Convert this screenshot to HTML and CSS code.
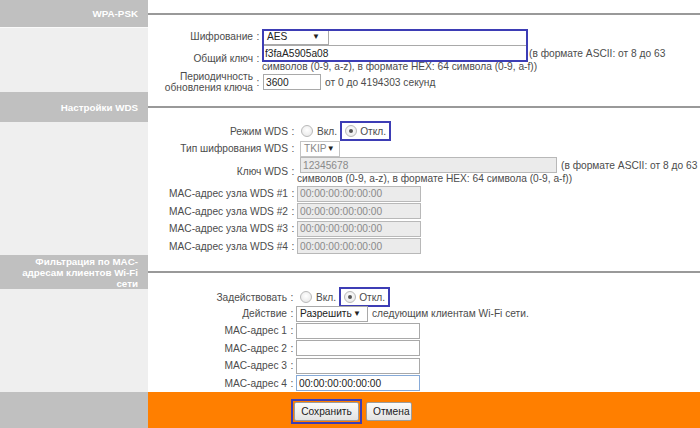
FILE: index.html
```html
<!DOCTYPE html>
<html lang="ru">
<head>
<meta charset="utf-8">
<title>WPA-PSK</title>
<link rel="stylesheet" href="styles.css">
</head>
<body>
<div class="page">
  <div class="band head h1">
    <div class="side">WPA-PSK</div>
    <div class="rule"></div>
  </div>
  <div class="band">
    <div class="side"></div>
    <div class="form f1">
      <div class="lbl">Шифрование</div><div class="col">:</div>
      <div class="val"><span class="sel s-aes"><span>AES</span><span class="arr">▼</span></span></div>

      <div class="lbl">Общий ключ</div><div class="col">:</div>
      <div class="val">
        <div class="line1"><input class="inp i-key" type="text" value="f3faA5905a08"><span class="note">(в формате ASCII: от 8 до 63</span></div>
        <div class="line2">символов (0-9, a-z), в формате HEX: 64 символа (0-9, a-f))</div>
      </div>

      <div class="lbl two">Периодичность<br>обновления ключа</div><div class="col">:</div>
      <div class="val"><div class="line1"><input class="inp i-period" type="text" value="3600"><span class="note">от 0 до 4194303 секунд</span></div></div>

      <div class="mark m1"></div>
    </div>
  </div>

  <div class="band head h2">
    <div class="side">Настройки WDS</div>
    <div class="rule"></div>
  </div>
  <div class="band">
    <div class="side"></div>
    <div class="form f2">
      <div class="lbl">Режим WDS</div><div class="col">:</div>
      <div class="val opts"><span class="opt"><span class="radio"></span>Вкл.</span><span class="opt hl"><span class="radio on"></span>Откл.</span></div>

      <div class="lbl">Тип шифрования WDS</div><div class="col">:</div>
      <div class="val"><span class="sel s-tkip off"><span>TKIP</span><span class="arr">▼</span></span></div>

      <div class="lbl">Ключ WDS</div><div class="col">:</div>
      <div class="val">
        <div class="line1"><input class="inp i-wdskey" type="text" value="12345678" disabled><span class="note">(в формате ASCII: от 8 до 63</span></div>
        <div class="line2">символов (0-9, a-z), в формате HEX: 64 символа (0-9, a-f))</div>
      </div>

      <div class="lbl">MAC-адрес узла WDS #1</div><div class="col">:</div>
      <div class="val"><input class="inp i-mac" type="text" value="00:00:00:00:00:00" disabled></div>
      <div class="lbl">MAC-адрес узла WDS #2</div><div class="col">:</div>
      <div class="val"><input class="inp i-mac" type="text" value="00:00:00:00:00:00" disabled></div>
      <div class="lbl">MAC-адрес узла WDS #3</div><div class="col">:</div>
      <div class="val"><input class="inp i-mac" type="text" value="00:00:00:00:00:00" disabled></div>
      <div class="lbl">MAC-адрес узла WDS #4</div><div class="col">:</div>
      <div class="val"><input class="inp i-mac" type="text" value="00:00:00:00:00:00" disabled></div>
    </div>
  </div>

  <div class="band head h3">
    <div class="side">Фильтрация по MAC-<br>адресам клиентов Wi-Fi<br>сети</div>
    <div class="rule"></div>
  </div>
  <div class="band">
    <div class="side"></div>
    <div class="form f3">
      <div class="lbl">Задействовать</div><div class="col">:</div>
      <div class="val opts"><span class="opt"><span class="radio"></span>Вкл.</span><span class="opt hl"><span class="radio on"></span>Откл.</span></div>

      <div class="lbl">Действие</div><div class="col">:</div>
      <div class="val line1"><span class="sel s-allow"><span>Разрешить</span><span class="arr">▼</span></span><span class="note">следующим клиентам Wi-Fi сети.</span></div>

      <div class="lbl">MAC-адрес 1</div><div class="col">:</div>
      <div class="val"><input class="inp i-mac2" type="text" value=""></div>
      <div class="lbl">MAC-адрес 2</div><div class="col">:</div>
      <div class="val"><input class="inp i-mac2" type="text" value=""></div>
      <div class="lbl">MAC-адрес 3</div><div class="col">:</div>
      <div class="val"><input class="inp i-mac2" type="text" value=""></div>
      <div class="lbl">MAC-адрес 4</div><div class="col">:</div>
      <div class="val"><input class="inp i-mac2 focus" type="text" value="00:00:00:00:00:00"></div>
    </div>
  </div>

  <div class="band foot">
    <div class="side"></div>
    <div class="actions">
      <span class="hl-btn"><button class="btn" type="button">Сохранить</button></span>
      <button class="btn" type="button">Отмена</button>
    </div>
  </div>
</div>
</body>
</html>
```

FILE: styles.css
```css
* { box-sizing: border-box; }

body {
  margin: 0;
  background: #fff;
  color: #4c4c4c;
  font: 10.2px "Liberation Sans", Arial, sans-serif;
}

.page { width: 700px; height: 428px; overflow: hidden; }

.band { display: flex; }

.side {
  width: 148px;
  flex: none;
  background: #efefef;
}

.head .side {
  background: #c0c0c0;
  color: #fff;
  font-weight: bold;
  font-size: 9.8px;
  line-height: 11px;
  text-align: right;
  padding-right: 10px;
  display: flex;
  align-items: center;
  justify-content: flex-end;
}

.h1 { height: 28px; }
.h1 .side { border-bottom: 1px solid #fafafa; }
.h2 { height: 30px; }
.h3 { height: 34px; }

.rule {
  flex: 1;
  display: flex;
  align-items: center;
}
.rule::before {
  content: "";
  flex: 1;
  height: 2px;
  background: #999;
}

.form {
  flex: 1;
  display: grid;
  align-items: center;
  position: relative;
}

.f1 {
  grid-template-columns: 106px 8px 1fr;
  grid-template-rows: 17px 27px 20px;
}
.f2 {
  grid-template-columns: 141px 8px 1fr;
  grid-template-rows: 18px 17px 28px repeat(4, 17.5px);
}
.f3 {
  grid-template-columns: 140px 8px 1fr;
  grid-template-rows: 16px 17px repeat(4, 17.5px);
}

.lbl {
  text-align: right;
  padding-right: 1px;
  white-space: nowrap;
}
.lbl.two { line-height: 11.5px; }

.col { text-align: center; }

.val { min-width: 0; white-space: nowrap; }

.line1 {
  display: flex;
  align-items: center;
  height: 16px;
}
.line2 { line-height: 12px; }
.f1 .line2 { line-height: 11px; }

.note { margin-left: 3px; }

.inp {
  display: block;
  height: 16px;
  margin: 0;
  padding: 0 2px;
  border: 1px solid #a9a9a9;
  background: #fff;
  color: #222;
  font: 10.2px "Liberation Sans", Arial, sans-serif;
  outline: none;
}
.inp:disabled {
  background: #ebebeb;
  border-color: #b8b8b8;
  color: #8a8a8a;
}
.inp.focus { border-color: #86aad8; }

.i-key { width: 266px; }
.i-period { width: 58px; margin-left: 1px; }
.i-wdskey { width: 257px; margin-left: 3px; }
.i-mac { width: 124px; }
.i-mac2 { width: 124px; }
.i-period + .note { margin-left: 4px; }
.i-key + .note { margin-left: 1px; }
.i-wdskey + .note { margin-left: 4px; }

.sel {
  display: inline-flex;
  align-items: center;
  justify-content: space-between;
  height: 16px;
  padding: 0 6px 0 4px;
  border: 1px solid #a9a9a9;
  background: #fff;
  color: #222;
}
.sel .arr { font-size: 8px; color: #222; }
.sel.off { color: #8a8a8a; border-color: #c4c4c4; }
.s-aes { width: 67px; padding-right: 8px; }
.s-tkip { width: 40px; margin-left: 3px; padding: 0 6px 0 3px; }
.s-allow { width: 72px; padding: 0 6px 0 3px; }
.s-allow + .note { margin-left: 4px; }

.opts {
  display: flex;
  align-items: center;
}
.opt {
  display: inline-flex;
  align-items: center;
  height: 16px;
}
.opt .radio { margin: 0 4px 0 4px; }
.opt.hl {
  height: 20px;
  margin-left: 3px;
  padding: 0 3px 0 0;
  border: 2px solid #3d3db5;
}
.opt.hl .radio { margin: 0 3px 0 3px; }

.radio {
  width: 12px;
  height: 12px;
  border-radius: 50%;
  border: 1px solid #b9b9b9;
  background: radial-gradient(circle at 50% 40%, #ffffff 0%, #e4e4e4 100%);
  display: inline-flex;
  align-items: center;
  justify-content: center;
}
.radio.on::after {
  content: "";
  width: 4px;
  height: 4px;
  border-radius: 50%;
  background: #555;
}

.mark {
  position: absolute;
  left: 114px;
  top: 1px;
  width: 266px;
  height: 33px;
  border: 2px solid #3d3db5;
  pointer-events: none;
}

.foot { height: 36px; }
.foot .side { background: #c0c0c0; }
.actions {
  flex: 1;
  background: #ff7f00;
  display: flex;
  align-items: center;
  padding: 2px 0 0 143px;
}
.hl-btn {
  display: inline-flex;
  border: 2px solid #3d3db5;
  padding: 1px;
}
.btn {
  height: 19px;
  margin: 0;
  padding: 0 6px;
  border: 1px solid #9c9c9c;
  border-radius: 2px;
  background: linear-gradient(#fbfbfb, #e2e2e2);
  color: #222;
  font: 10.2px "Liberation Sans", Arial, sans-serif;
}
.hl-btn .btn { width: 65px; }
.hl-btn + .btn { margin-left: 4px; width: 46px; }
```
